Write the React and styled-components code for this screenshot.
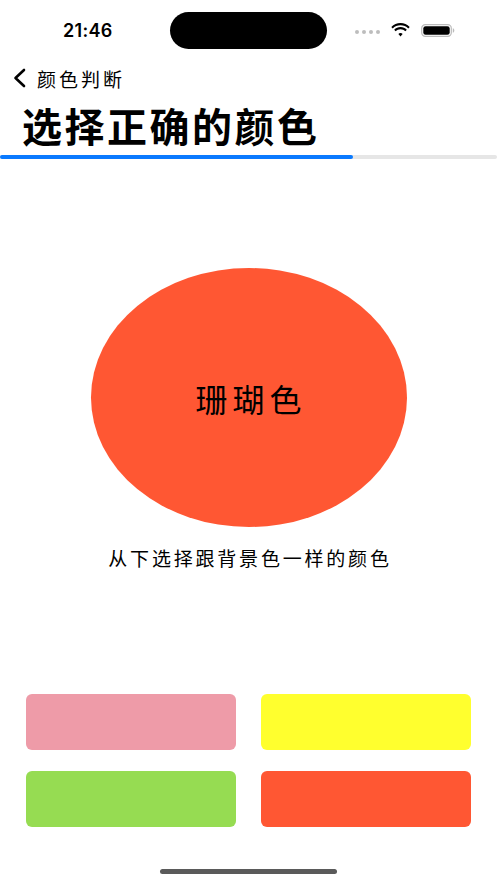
import React from 'react'
import styled, {createGlobalStyle} from 'styled-components'

const GlobalStyle = createGlobalStyle`
  html, body {
    margin: 0;
    padding: 0;
    background: #FFFFFF;
  }
  body {
    font-family: "Noto Sans CJK SC", "Noto Sans", sans-serif;
    color: #000;
  }
`;

const Screen = styled.div`
  width: 497px;
  height: 883px;
  display: flex;
  flex-direction: column;
  background: #FFFFFF;
  overflow: hidden;
`;

const StatusBar = styled.div`
  height: 60px;
  display: flex;
  align-items: center;
  padding: 0 42px 0 63px;
  box-sizing: border-box;
`;

const Time = styled.div`
  width: 57px;
  font-family: Inter, "Liberation Sans", sans-serif;
  font-weight: 600;
  font-size: 18px;
  letter-spacing: 0.3px;
  margin-top: 1px;
`;

const Island = styled.div`
  width: 157px;
  height: 37px;
  border-radius: 19px;
  background: #000;
  margin-left: 50px;
`;

const Indicators = styled.div`
  margin-left: auto;
  display: flex;
  align-items: center;
  gap: 11px;
`;

const Dots = styled.div`
  display: flex;
  gap: 3px;
  margin-top: 4px;
  span {
    width: 4px;
    height: 4px;
    border-radius: 2px;
    background: #bdbdbd;
  }
`;

const NavRow = styled.div`
  display: flex;
  align-items: center;
  height: 36px;
  padding-left: 12px;
  gap: 10px;
`;

const BackTitle = styled.div`
  font-size: 19px;
  letter-spacing: 3px;
`;

const PageTitle = styled.h1`
  margin: 0;
  padding-left: 22px;
  font-size: 40px;
  font-weight: 700;
  letter-spacing: 2.5px;
  line-height: 59px;
`;

const Track = styled.div`
  height: 4px;
  background: #E6E6E6;
  border-radius: 2px;
`;

const Fill = styled.div`
  height: 100%;
  border-radius: 2px;
  background: #0A7AFF;
`;

const Stage = styled.div`
  display: flex;
  flex-direction: column;
  align-items: center;
  padding-top: 109px;
`;

const Ellipse = styled.div`
  width: 316px;
  height: 259px;
  border-radius: 50%;
  background: ${p => p.color};
  display: flex;
  align-items: center;
  justify-content: center;
`;

const ColorName = styled.div`
  font-size: 32px;
  letter-spacing: 5px;
  margin-left: 5px;
`;

const Hint = styled.div`
  margin-top: 17px;
  font-size: 19px;
  letter-spacing: 2.8px;
  margin-left: 3px;
`;

const Options = styled.div`
  margin-top: 123px;
  padding: 0 26px;
  display: grid;
  grid-template-columns: 1fr 1fr;
  column-gap: 25px;
  row-gap: 21px;
`;

const Option = styled.button`
  height: 56px;
  border: none;
  border-radius: 6px;
  background: ${p => p.color};
  padding: 0;
  cursor: pointer;
`;

const HomeBar = styled.div`
  margin: auto auto 9px;
  width: 177px;
  height: 5px;
  border-radius: 3px;
  background: #5a5a5a;
`;

const options = ['#EE9BA8', '#FFFF2E', '#96DC52', '#FF5733'];

export default function App() {
  const progress = 353 / 497;
  return (
    <Screen>
      <GlobalStyle/>
      <StatusBar>
        <Time>21:46</Time>
        <Island/>
        <Indicators>
          <Dots><span/><span/><span/><span/></Dots>
          <svg width="19" height="14" viewBox="0 0 19 14">
            <path d="M9.5 2.2c3 0 5.8 1.2 7.8 3.2l1.4-1.5C16.3 1.5 13 0 9.5 0S2.7 1.5.3 3.9l1.4 1.5c2-2 4.8-3.2 7.8-3.2z" fill="#000"/>
            <path d="M9.5 6.2c1.9 0 3.6.7 4.9 2l1.4-1.5C14.2 5 11.9 4 9.5 4S4.8 5 3.2 6.7l1.4 1.5c1.3-1.3 3-2 4.9-2z" fill="#000"/>
            <path d="M9.5 10c.8 0 1.6.3 2.1.9L9.5 13.6 7.4 10.9c.5-.6 1.3-.9 2.1-.9z" fill="#000"/>
          </svg>
          <svg width="34" height="13" viewBox="0 0 34 13">
            <rect x="0.7" y="0.7" width="29.6" height="11.6" rx="3.6" fill="none" stroke="#bbb" strokeWidth="1.2"/>
            <rect x="2.3" y="2.3" width="26.4" height="8.4" rx="2.3" fill="#000"/>
            <path d="M31.8 4.3c.9.3 1.5 1.1 1.5 2.2s-.6 1.9-1.5 2.2z" fill="#bbb"/>
          </svg>
        </Indicators>
      </StatusBar>
      <NavRow>
        <svg width="15" height="20" viewBox="0 0 15 20">
          <path d="M12 2L3.5 10l8.5 8" fill="none" stroke="#000" strokeWidth="2.6" strokeLinecap="round" strokeLinejoin="round"/>
        </svg>
        <BackTitle>颜色判断</BackTitle>
      </NavRow>
      <PageTitle>选择正确的颜色</PageTitle>
      <Track>
        <Fill style={{width: `${progress * 100}%`}}/>
      </Track>
      <Stage>
        <Ellipse color="#FF5733">
          <ColorName>珊瑚色</ColorName>
        </Ellipse>
        <Hint>从下选择跟背景色一样的颜色</Hint>
      </Stage>
      <Options>
        {options.map(c => <Option key={c} color={c}/>)}
      </Options>
      <HomeBar/>
    </Screen>
  )
}
